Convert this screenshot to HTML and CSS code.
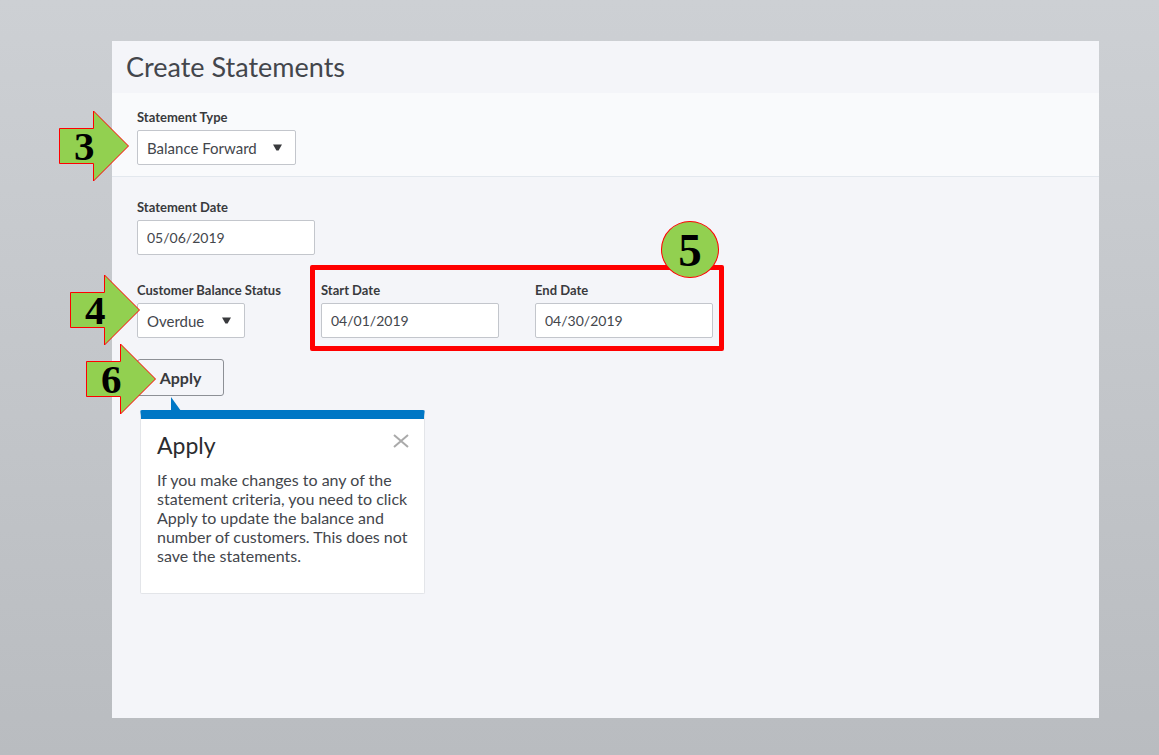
FILE: index.html
```
<!DOCTYPE html>
<html lang="en">
<head>
<meta charset="utf-8">
<meta name="viewport" content="width=device-width, initial-scale=1">
<title>Create Statements</title>
<link rel="stylesheet" href="styles.css">
</head>
<body>
<main class="panel">
  <header class="panel-header"><h1 class="title">Create Statements</h1></header>
  <form class="form">
    <section class="type-section">
      <div class="field">
        <label class="label" for="type">Statement Type</label>
        <div class="select-wrap select-type">
          <select class="control" id="type"><option>Balance Forward</option><option>Open Item</option></select>
          <svg class="caret" viewBox="0 0 9 7" aria-hidden="true"><path d="M0 0.5h9L5.6 6.5H3.4z"/></svg>
        </div>
        <div class="step step-3">
          <svg class="step-arrow" viewBox="0 0 70 72" aria-hidden="true"><path d="M0.5 18.5H34.5V1L69.5 36L34.5 71V53.5H0.5z"/></svg>
          <span class="step-number">3</span>
        </div>
      </div>
    </section>
    <section class="criteria">
      <div class="field">
        <label class="label" for="date">Statement Date</label>
        <input class="control date" id="date" type="text" value="05/06/2019">
      </div>
      <div class="row">
        <div class="field status">
          <label class="label" for="status">Customer Balance Status</label>
          <div class="select-wrap select-status">
            <select class="control" id="status"><option>Overdue</option><option>Open</option></select>
            <svg class="caret" viewBox="0 0 9 7" aria-hidden="true"><path d="M0 0.5h9L5.6 6.5H3.4z"/></svg>
          </div>
          <div class="step step-4">
            <svg class="step-arrow" viewBox="0 0 70 72" aria-hidden="true"><path d="M0.5 18.5H34.5V1L69.5 36L34.5 71V53.5H0.5z"/></svg>
            <span class="step-number">4</span>
          </div>
        </div>
        <div class="date-range">
          <div class="field">
            <label class="label" for="start">Start Date</label>
            <input class="control date" id="start" type="text" value="04/01/2019">
          </div>
          <div class="field">
            <label class="label" for="end">End Date</label>
            <input class="control date" id="end" type="text" value="04/30/2019">
          </div>
          <span class="step-circle">5</span>
        </div>
      </div>
      <div class="action">
        <button class="apply" type="button">Apply</button>
        <div class="step step-6">
          <svg class="step-arrow" viewBox="0 0 70 72" aria-hidden="true"><path d="M0.5 18.5H34.5V1L69.5 36L34.5 71V53.5H0.5z"/></svg>
          <span class="step-number">6</span>
        </div>
      </div>
      <aside class="popover">
        <svg class="pointer" viewBox="0 0 10 14" aria-hidden="true"><path d="M0 0L10 14H0z"/></svg>
        <div class="popover-head">
          <h2 class="popover-title">Apply</h2>
          <button class="close" type="button" aria-label="Close">
            <svg class="close-icon" viewBox="0 0 16 14" aria-hidden="true"><path d="M1 1L15 13M15 1L1 13"/></svg>
          </button>
        </div>
        <p class="popover-text">If you make changes to any of the statement criteria, you need to click Apply to update the balance and number of customers. This does not save the statements.</p>
      </aside>
    </section>
  </form>
</main>
</body>
</html>
```
FILE: styles.css
```
* { box-sizing: border-box; }

body {
  display: flex;
  min-height: 100vh;
  margin: 0;
  padding: 41px 60px 37px 112px;
  background: linear-gradient(#cdd0d4, #b9bcc0);
  color: #43464c;
  font-family: Lato, "Open Sans", sans-serif;
  font-size: 14px;
}

.panel { flex: 1; background: #f4f5f9; }
.panel-header { padding: 10px 14px; }
.title { margin: 0; font-size: 27px; line-height: 32px; font-weight: 400; }

.type-section {
  padding: 16px 25px 11px;
  background: #f9fafc;
  border-bottom: 1px solid #e3e8ee;
}

.criteria {
  display: flex;
  flex-direction: column;
  align-items: flex-start;
  padding: 22px 25px;
}

.field {
  position: relative;
  display: flex;
  flex-direction: column;
  align-items: flex-start;
  gap: 5px;
}

.label {
  color: #393a3d;
  font-size: 13px;
  line-height: 16px;
  font-weight: 700;
  white-space: nowrap;
}

.control {
  appearance: none;
  width: 100%;
  height: 35px;
  padding: 0 9px;
  border: 1px solid #c3c6cc;
  border-radius: 2px;
  background: #fff;
  color: #43464c;
  font: inherit;
}

select.control { font-size: 15px; padding-top: 1px; }

.date { width: 178px; }
.select-wrap { position: relative; }
.select-type { width: 159px; }
.select-status { width: 108px; }

.caret {
  position: absolute;
  top: 14px;
  right: 14px;
  width: 9px;
  height: 7px;
  fill: #393a3d;
  pointer-events: none;
}

.row { display: flex; gap: 36px; margin-top: 27px; }
.status { width: 148px; }
.date-range { position: relative; display: flex; gap: 36px; }

.date-range::before {
  content: "";
  position: absolute;
  inset: -17px -11px -13px;
  border: 5px solid #f00;
  border-radius: 2px;
  pointer-events: none;
}

.action { position: relative; margin-top: 21px; }

.apply {
  width: 87px;
  height: 37px;
  padding: 0;
  border: 1px solid #8d9096;
  border-radius: 3px;
  background: #f4f5f9;
  color: #393a3d;
  font: inherit;
  font-size: 16px;
  font-weight: 700;
}

.step {
  position: absolute;
  display: grid;
  width: 70px;
  height: 72px;
  pointer-events: none;
}

.step-3 { top: 1px; left: -78px; }
.step-4 { top: -8px; left: -67px; }
.step-6 { top: -16px; left: -51px; }

.step-arrow {
  grid-area: 1 / 1;
  width: 70px;
  height: 72px;
  fill: #92d050;
  stroke: #f00;
}

.step-number {
  grid-area: 1 / 1;
  align-self: center;
  padding-left: 15px;
  color: #000;
  font: 700 41px/40px "Liberation Serif", serif;
}

.step-circle {
  position: absolute;
  top: -61px;
  right: -6px;
  display: grid;
  place-items: center;
  width: 58px;
  height: 57px;
  border: 1px solid #f00;
  border-radius: 50%;
  background: #92d050;
  color: #000;
  font: 700 47px/48px "Liberation Serif", serif;
}

.popover {
  position: relative;
  width: 285px;
  max-width: 100%;
  margin: 14px 0 0 3px;
  padding: 12px 12px 28px 16px;
  border: 1px solid #e3e5e9;
  border-top: 9px solid #0077c5;
  border-radius: 2px;
  background: #fff;
}

.pointer {
  position: absolute;
  top: -22px;
  left: 30px;
  width: 10px;
  height: 14px;
  fill: #0077c5;
}

.popover-head { display: flex; justify-content: space-between; align-items: flex-start; }
.popover-title { margin: 0; color: #2b2c2f; font-size: 23px; line-height: 28px; font-weight: 400; }
.close { display: flex; margin: 0; padding: 3px 3px 0 0; border: 0; background: none; }
.close-icon { width: 16px; height: 14px; fill: none; stroke: #aaa; stroke-width: 2; }
.popover-text { margin: 11px 0 0; font-size: 16px; line-height: 19px; }
```
